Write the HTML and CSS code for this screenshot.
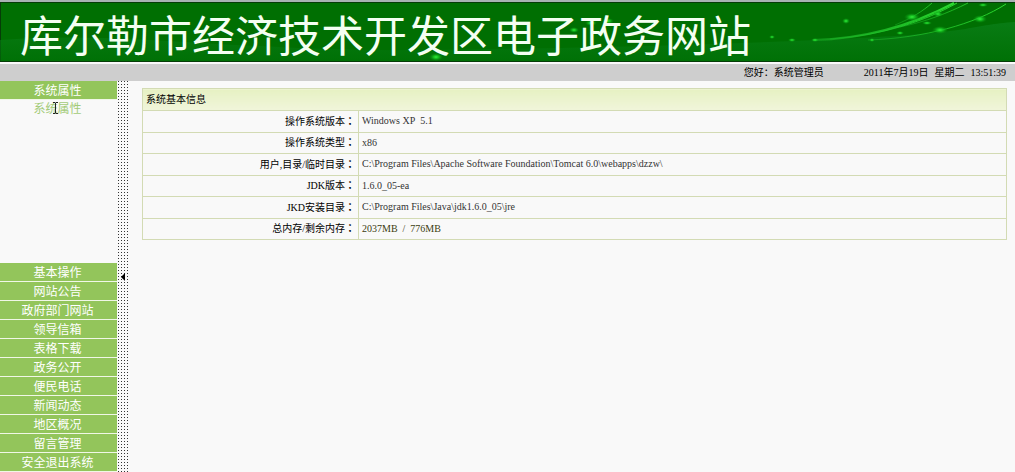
FILE: index.html
```html
<!DOCTYPE html>
<html lang="zh-CN">
<head>
<meta charset="utf-8">
<title>库尔勒市经济技术开发区电子政务网站</title>
<link rel="stylesheet" href="styles.css">
</head>
<body>
<header class="banner">
  <h1 class="site-title">库尔勒市经济技术开发区电子政务网站</h1>
  <svg class="banner-art" viewBox="0 0 1015 60" preserveAspectRatio="none" aria-hidden="true">
    <defs>
      <linearGradient id="hill" x1="0" y1="0" x2="0" y2="1">
        <stop offset="0" stop-color="#0e8420"/>
        <stop offset="1" stop-color="#007208"/>
      </linearGradient>
      <linearGradient id="ray" x1="0" y1="0" x2="1" y2="0">
        <stop offset="0" stop-color="#1db82a" stop-opacity="0.5"/>
        <stop offset="1" stop-color="#2bdc30"/>
      </linearGradient>
      <radialGradient id="glow">
        <stop offset="0" stop-color="#35f03c"/>
        <stop offset="0.4" stop-color="#18c924" stop-opacity="0.8"/>
        <stop offset="1" stop-color="#0a8a10" stop-opacity="0"/>
      </radialGradient>
    </defs>
    <path d="M0 38C120 28 240 50 420 48S740 42 860 36S970 23 1015 20V59H0Z" fill="url(#hill)" opacity="0.6"/>
    <g fill="none" stroke="url(#ray)">
      <path d="M813 38C860 37 905 27 954 1" stroke-width="2"/>
      <path d="M830 37C885 33 925 19 957 1"/>
      <path d="M895 23C912 16 923 9 932 1" stroke-width="0.8"/>
      <path d="M900 25C925 20 948 11 968 1" stroke-width="0.8"/>
      <path d="M868 38C925 36 975 22 1006 2"/>
    </g>
    <g fill="url(#glow)">
      <ellipse cx="912" cy="15" rx="8" ry="4"/>
      <ellipse cx="940" cy="28" rx="8" ry="4"/>
      <ellipse cx="938" cy="12" rx="5" ry="3"/>
      <ellipse cx="980" cy="17" rx="7" ry="4"/>
      <ellipse cx="983" cy="3" rx="5" ry="2"/>
      <ellipse cx="927" cy="21" rx="5" ry="2"/>
      <ellipse cx="900" cy="31" rx="4" ry="2"/>
      <ellipse cx="872" cy="38" rx="3" ry="2"/>
      <ellipse cx="846" cy="19" rx="4" ry="3"/>
      <ellipse cx="815" cy="38" rx="4" ry="2"/>
      <ellipse cx="792" cy="38" rx="4" ry="2"/>
      <ellipse cx="772" cy="35" rx="3" ry="2"/>
      <ellipse cx="608" cy="19" rx="6" ry="3"/>
      <ellipse cx="591" cy="21" rx="6" ry="3"/>
      <ellipse cx="574" cy="28" rx="5" ry="3"/>
      <ellipse cx="436" cy="55" rx="7" ry="4"/>
    </g>
  </svg>
</header>
<div class="status">
  <span>您好：系统管理员</span>
  <time class="clock" datetime="2011-07-19T13:51:39"><span>2011年7月19日</span><span>星期二</span><span>13:51:39</span></time>
</div>
<div class="layout">
  <nav class="sidebar" aria-label="主菜单">
    <section class="panel">
      <a class="menu" href="#properties">系统属性</a>
      <a class="submenu" href="#system">系统属性
        <svg class="pointer" viewBox="0 0 7 12" aria-hidden="true"><path d="M1 .5H3L3.500 1L4 .5H6M3.500 1V11M1 11.500H3L3.500 11L4 11.500H6" fill="none" stroke="#222"/></svg>
      </a>
    </section>
    <a class="menu" href="#basic">基本操作</a>
    <a class="menu" href="#notice">网站公告</a>
    <a class="menu" href="#departments">政府部门网站</a>
    <a class="menu" href="#mailbox">领导信箱</a>
    <a class="menu" href="#forms">表格下载</a>
    <a class="menu" href="#affairs">政务公开</a>
    <a class="menu" href="#phones">便民电话</a>
    <a class="menu" href="#news">新闻动态</a>
    <a class="menu" href="#region">地区概况</a>
    <a class="menu" href="#messages">留言管理</a>
    <a class="menu" href="#exit">安全退出系统</a>
  </nav>
  <button class="splitter" type="button" aria-label="收起菜单">
    <svg class="arrow" viewBox="0 0 4 8" aria-hidden="true"><path d="M4 0V8L0 4Z"/></svg>
  </button>
  <main class="content">
    <table class="info">
      <thead><tr><th colspan="2" scope="colgroup">系统基本信息</th></tr></thead>
      <tbody>
        <tr><th scope="row">操作系统版本<span class="colon" lang="zh-TW">：</span></th><td>Windows XP&nbsp; 5.1</td></tr>
        <tr><th scope="row">操作系统类型<span class="colon" lang="zh-TW">：</span></th><td>x86</td></tr>
        <tr><th scope="row">用户,目录/临时目录<span class="colon" lang="zh-TW">：</span></th><td>C:\Program Files\Apache Software Foundation\Tomcat 6.0\webapps\dzzw\</td></tr>
        <tr><th scope="row">JDK版本<span class="colon" lang="zh-TW">：</span></th><td>1.6.0_05-ea</td></tr>
        <tr><th scope="row">JKD安装目录<span class="colon" lang="zh-TW">：</span></th><td>C:\Program Files\Java\jdk1.6.0_05\jre</td></tr>
        <tr><th scope="row">总内存/剩余内存<span class="colon" lang="zh-TW">：</span></th><td class="memory">2037MB&nbsp; /&nbsp; 776MB</td></tr>
      </tbody>
    </table>
  </main>
</div>
</body>
</html>
```
FILE: styles.css
```css
* {
  box-sizing: border-box;
}

body {
  margin: 0;
  min-height: 100vh;
  display: flex;
  flex-direction: column;
  background: #f9f9f9;
  color: #000;
  font: 10px/16px "Liberation Serif", "Noto Sans CJK SC", serif;
}

.banner {
  position: relative;
  display: flex;
  align-items: center;
  height: 62px;
  padding: 2px 20px 0;
  border-top: 2px solid #a9b3b3;
  background: #006f02;
  box-shadow: inset 0 1px #063c08, inset 1px 0 #063c08, inset 0 -1px #063c08;
}

.banner-art {
  position: absolute;
  inset: 0;
  width: 100%;
  height: 100%;
}

.site-title {
  position: relative;
  z-index: 1;
  margin: 0;
  color: #f4fff2;
  font: 400 43px/52px "Noto Sans CJK SC", sans-serif;
  white-space: nowrap;
}

.status {
  display: flex;
  justify-content: flex-end;
  gap: 40px;
  margin-top: 2px;
  padding: 1px 9px 0 0;
  background: #cecece;
}

.clock {
  display: flex;
  gap: 6px;
}

.layout {
  flex: 1;
  display: flex;
}

.sidebar {
  flex: none;
  width: 117px;
  font: 12px/18px "Noto Sans CJK SC", sans-serif;
  text-align: center;
}

.panel {
  height: 182px;
}

.menu,
.submenu {
  display: block;
  padding-right: 2px;
  text-decoration: none;
}

.menu {
  background: #93c55b;
  border-bottom: 1px solid #f0f7e6;
  color: #fff;
}

.submenu {
  position: relative;
  line-height: 16px;
  color: #a3cb78;
}

.pointer {
  position: absolute;
  top: 2px;
  left: 52px;
  width: 7px;
  height: 12px;
}

.splitter {
  flex: none;
  display: flex;
  align-items: center;
  justify-content: center;
  width: 11px;
  padding: 0;
  border: 0;
  background: conic-gradient(from 270deg at 1px 1px, #333 90deg, transparent 0) 1px 0 / 3px 3px;
}

.arrow {
  width: 4px;
  height: 8px;
}

.content {
  flex: 1;
  padding: 7px 8px 0 14px;
}

.info {
  width: 100%;
  height: 152px;
  border-collapse: collapse;
}

.info th,
.info td {
  height: 21px;
  padding: 0 3px;
  border: 1px solid #d3dbb4;
  font-weight: 400;
  text-align: left;
}

.info thead th {
  height: 22px;
  background: linear-gradient(#e6f1c3, #f1f5da);
}

.info tbody th {
  width: 25%;
  text-align: right;
}

.info .colon {
  font-family: "Noto Sans CJK TC", sans-serif;
  font-weight: 700;
}

.info td {
  color: #333;
}

.info .memory {
  color: #3c3c10;
}
```
